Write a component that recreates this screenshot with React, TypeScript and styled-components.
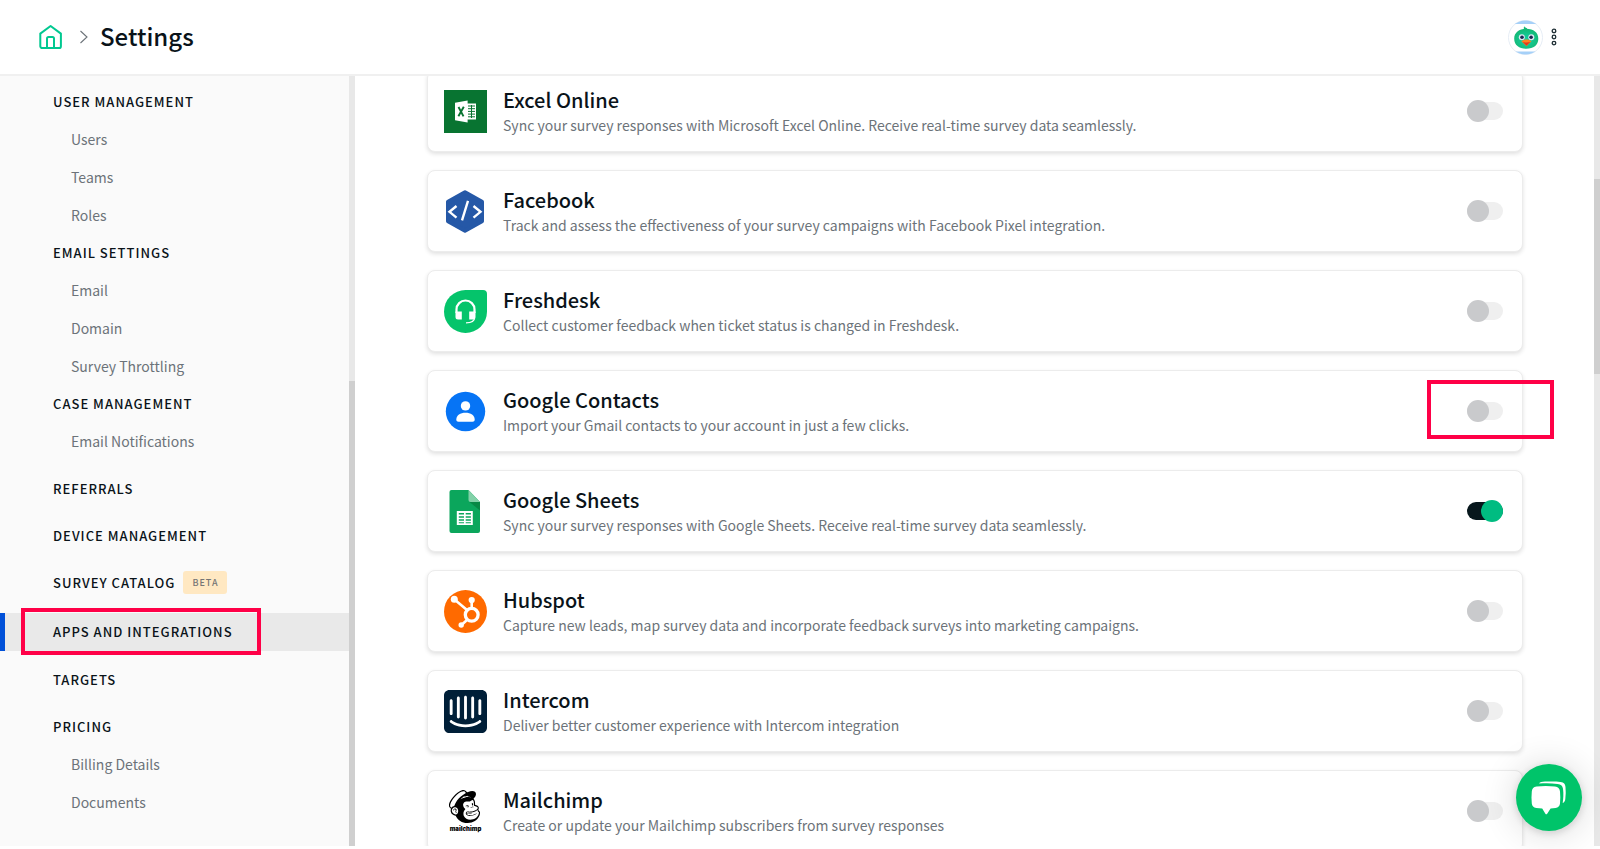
import React from 'react';
import styled, { createGlobalStyle, css } from 'styled-components';
import { SiIntercom, SiMailchimp } from 'react-icons/si';

const GlobalStyle = createGlobalStyle`
  *, *::before, *::after { box-sizing: border-box; }
  body {
    margin: 0;
    background: #fff;
    color: #0a1319;
    font-family: "Noto Sans CJK SC", "Open Sans", sans-serif;
  }
`;

const Page = styled.div`
  display: flex;
  flex-direction: column;
  height: 100vh;
  padding-bottom: 3px;
  overflow: hidden;
`;

const Header = styled.header`
  display: flex;
  flex: none;
  align-items: center;
  justify-content: space-between;
  height: 76px;
  padding: 0 41px 0 38px;
  border-bottom: 2px solid #f0f0f0;
  background: #fff;
`;

const Breadcrumb = styled.nav`
  display: flex;
  align-items: center;
`;

const HomeLink = styled.a`
  display: flex;
  margin-right: 16px;
`;

const PageTitle = styled.h1`
  margin: 0 0 0 11px;
  padding-bottom: 2px;
  font-size: 24px;
  font-weight: 500;
  line-height: 36px;
`;

const HeaderActions = styled.div`
  display: flex;
  align-items: center;
  gap: 6px;
`;

const PlainButton = styled.button`
  display: flex;
  padding: 0;
  border: 0;
  background: none;
  cursor: pointer;
`;

const Body = styled.div`
  display: flex;
  flex: 1;
  min-height: 0;
`;

const Sidebar = styled.aside`
  display: flex;
  flex: none;
  width: 355px;
  background: #fafafa;
`;

const Menu = styled.nav`
  flex: 1;
  padding-top: 7px;
`;

const MenuSection = styled.section<{ $gap: number }>`
  margin-top: ${(p) => p.$gap}px;
`;

const SectionLink = styled.a<{ $active?: boolean }>`
  position: relative;
  display: flex;
  align-items: center;
  height: 37px;
  padding-left: 53px;
  color: #0a1319;
  font-size: 13px;
  font-weight: 500;
  letter-spacing: 1px;
  line-height: 20px;
  text-decoration: none;
  ${(p) =>
    p.$active &&
    css`
      height: 38px;
      padding-left: 48px;
      border-left: 5px solid #0050d8;
      background: #e9e9e9;
    `}
`;

const SubLink = styled.a`
  display: flex;
  align-items: center;
  height: 38px;
  padding-left: 71px;
  color: #6c7379;
  font-size: 14px;
  line-height: 20px;
  text-decoration: none;
`;

const Badge = styled.span`
  margin-left: 8px;
  padding: 0 8px 0 9px;
  border-radius: 3px;
  background: #ffe8c2;
  color: #757575;
  font-size: 9px;
  line-height: 23px;
`;

const Highlight = styled.span<{ $kind: 'menu' | 'toggle' }>`
  position: absolute;
  border: 4px solid #ff0047;
  pointer-events: none;
  ${(p) =>
    p.$kind === 'menu'
      ? css`
          inset: -5px 88px -4px 16px;
        `
      : css`
          inset: 9px -32px 12px auto;
          width: 127px;
        `}
`;

const ScrollTrack = styled.div`
  display: flex;
  flex: none;
  flex-direction: column;
  width: 6px;
  background: #e8e8e8;
`;

const ScrollThumb = styled.div<{ $before: number; $size: number; $after: number }>`
  display: contents;
  &::before {
    content: '';
    flex: ${(p) => p.$before} 0 0;
  }
  & > i {
    flex: ${(p) => p.$size} 0 0;
    background: #cfcfcf;
  }
  &::after {
    content: '';
    flex: ${(p) => p.$after} 0 0;
  }
`;

const Main = styled.main`
  flex: 1;
  min-width: 0;
  padding: 0 71px 0 72px;
  overflow: hidden;
`;

const CardList = styled.ul`
  display: flex;
  flex-direction: column;
  gap: 18px;
  margin: -6px 0 0;
  padding: 0;
  list-style: none;
`;

const Card = styled.li`
  position: relative;
  display: flex;
  align-items: center;
  gap: 16px;
  height: 82px;
  padding: 0 19px 0 16px;
  border: 1px solid #ececec;
  border-radius: 8px;
  background: #fff;
  box-shadow: 0 2px 4px rgba(0, 0, 0, 0.12);
`;

const IconBox = styled.span`
  display: flex;
  flex: none;
  align-items: center;
  justify-content: center;
  width: 43px;
  height: 43px;
`;

const CardText = styled.label`
  flex: 1;
  cursor: pointer;
`;

const CardTitle = styled.span`
  display: block;
  font-size: 20px;
  font-weight: 500;
  line-height: 28px;
`;

const CardDescription = styled.span`
  display: block;
  color: #6c7379;
  font-size: 14px;
  line-height: 22px;
`;

const Switch = styled.input`
  position: relative;
  width: 36px;
  height: 18px;
  margin: 0;
  border-radius: 9px;
  appearance: none;
  background: #efefef;
  cursor: pointer;
  &::before {
    content: '';
    position: absolute;
    top: -2px;
    left: 0;
    width: 22px;
    height: 22px;
    border-radius: 50%;
    background: #c9cacc;
  }
  &:checked {
    background: #07171c;
  }
  &:checked::before {
    left: 14px;
    background: #00bc81;
  }
`;

const ChatButton = styled(PlainButton)`
  position: fixed;
  right: 18px;
  bottom: 18px;
  align-items: center;
  justify-content: center;
  width: 66px;
  height: 67px;
  border-radius: 50%;
  background: #00c46a;
  box-shadow: 0 2px 8px rgba(0, 0, 0, 0.14), 0 2px 36px rgba(0, 0, 0, 0.16);
`;

const HomeIcon = () => (
  <svg width="25" height="26" viewBox="0 0 25 26" fill="none" stroke="#00c890" strokeWidth="2" strokeLinejoin="round">
    <path d="M2.3 9.6 12.6 2l10.3 7.6v12.6a1.9 1.9 0 0 1-1.9 1.9H4.2a1.9 1.9 0 0 1-1.9-1.9z" />
    <path d="M9 24V14.5a1.5 1.5 0 0 1 1.5-1.5h4a1.5 1.5 0 0 1 1.5 1.5V24" />
  </svg>
);

const ChevronIcon = () => (
  <svg width="10" height="14" viewBox="0 0 10 14" fill="none" stroke="#6c7379" strokeWidth="1.1">
    <path d="M1.5 1 8 7l-6.5 6" />
  </svg>
);

const AvatarIcon = () => (
  <svg width="35" height="35" viewBox="0 0 35 35">
    <defs>
      <clipPath id="avatar-clip">
        <circle cx="17.5" cy="17.5" r="17" />
      </clipPath>
      <radialGradient id="avatar-body" cx="50%" cy="55%" r="55%">
        <stop offset="0" stopColor="#14d3a8" />
        <stop offset="1" stopColor="#14b874" />
      </radialGradient>
    </defs>
    <circle cx="17.5" cy="17.5" r="17" fill="#fff" stroke="#e6edf5" />
    <g clipPath="url(#avatar-clip)" fill="#a5d0f8">
      <path d="M0 0h35v4H0zM0 31.500h35V35H0z" />
    </g>
    <path d="M16 9.5c-.3-1.500-.3-2.600.3-3.200.3.900 1 1.300 2.600 1.900l.6 1.500z" fill="#14b874" />
    <path d="M18.300 8.800c7.200 0 12 3.800 12 10 0 6.400-4.900 10-12 10S6.200 25.200 6.200 18.800c0-6.200 5-10 12.100-10z" fill="url(#avatar-body)" />
    <circle cx="13.800" cy="17.300" r="3" fill="#dfe6f2" />
    <circle cx="23.300" cy="17.300" r="3" fill="#dfe6f2" />
    <circle cx="14" cy="17.300" r="1.800" fill="#1c2750" />
    <circle cx="23.100" cy="17.300" r="1.800" fill="#1c2750" />
    <path d="M13.300 21.300c2-1.500 3.600-1.800 5.200-1.800s3.200.3 4.900 1.800l-4.900 4.900z" fill="#ff8420" />
    <path d="M14.500 21.800c2.500 1 5.500 1 8 0l-4 4z" fill="#e03c20" />
  </svg>
);

const MoreIcon = () => (
  <svg width="10" height="20" viewBox="0 0 10 20" fill="none" stroke="#1d2d33" strokeWidth="1.3">
    <circle cx="5" cy="3.9" r="1.800" />
    <circle cx="5" cy="10" r="1.800" />
    <circle cx="5" cy="16.1" r="1.800" />
  </svg>
);

const ChatIcon = () => (
  <svg width="36" height="34" viewBox="0 0 36 34" fill="#fff">
    <path d="M8 2.600C9 1 11 .8 14 .6 19 .3 25 .3 29.500.9c3.500.4 4.700 2 5 5 .4 4 .3 8-.2 12-.2 2-1 3.400-2.600 4 .7-4.500.9-9 .4-13.400-.4-3.600-2-5.200-5.600-5.600C20 2.200 14 2.200 8 2.600z" />
    <path d="M5.500 5.600c6-.8 12.500-.8 18.500 0 3 .4 4.700 1.900 5 4.800.4 4 .4 8 0 12-.3 2.700-1.700 4.100-4.500 4.500-1.700.2-3.200.4-4.900.5l-3.400 5.300c-.6.800-1.300.8-1.800 0L11.200 27.400c-2-.1-3.900-.3-5.900-.5-2.800-.4-4.200-1.800-4.500-4.500-.4-4-.4-8 0-12 .3-2.900 1.700-4.400 4.700-4.800z" />
  </svg>
);

const ExcelIcon = () => (
  <svg width="43" height="43" viewBox="0 0 43 43">
    <path fill="#087431" d="M0 0h43v43H0z" />
    <path fill="#fff" d="M23 13.500h9v16h-9z" />
    <path fill="#fff" d="m11 12.800 12.600-2.200v21.800L11 30.200z" />
    <path stroke="#087431" strokeWidth="1" fill="none" d="M24 16h7M24 18.700h7M24 21.400h7M24 24.100h7M24 26.800h7M27.500 15v13" />
    <path stroke="#087431" strokeWidth="1.900" fill="none" d="m14.500 17 5 9.400M19.800 16.700l-5.400 9.600" />
  </svg>
);

const FacebookPixelIcon = () => (
  <svg width="43" height="43" viewBox="0 0 43 43">
    <path fill="#2558a7" stroke="#2558a7" strokeWidth="4" strokeLinejoin="round" d="m21 2.300 17 9.500v19.500l-17 9.400-17-9.400V11.800z" />
    <path fill="none" stroke="#fff" strokeWidth="2.400" d="m12.500 16-7 5.800 7 5.800M29.500 16l7 5.800-7 5.800M24 10.800l-6 19.600" />
  </svg>
);

const FreshdeskIcon = () => (
  <svg width="43" height="43" viewBox="0 0 43 43">
    <path fill="#05c46b" d="M21.500 0H39a4 4 0 0 1 4 4v17.500A21.500 21.500 0 1 1 21.500 0z" />
    <path fill="none" stroke="#fff" strokeWidth="2.200" d="M12.500 23v-3.500a9 9 0 0 1 18 0V23" />
    <path fill="#fff" d="M11.500 21.500h6.300v8H14a2.500 2.500 0 0 1-2.500-2.500zM25.200 21.500h6.300V27a2.500 2.500 0 0 1-2.500 2.500h-3.800z" />
    <path fill="none" stroke="#fff" strokeWidth="1.300" d="M30.500 28c0 3-2.500 4.800-8.500 4.800" />
  </svg>
);

const GoogleContactsIcon = () => (
  <svg width="43" height="43" viewBox="0 0 43 43">
    <circle cx="21.500" cy="21.500" r="19.700" fill="#0674f5" />
    <circle cx="21.500" cy="15.900" r="4.700" fill="#fff" />
    <path fill="#fff" d="M12.300 29.500c0-4.300 4-6.800 9.200-6.800s9.200 2.500 9.200 6.800c0 1.300-.8 2.300-2.200 2.300h-14c-1.400 0-2.200-1-2.200-2.300z" />
  </svg>
);

const GoogleSheetsIcon = () => (
  <svg width="43" height="43" viewBox="0 0 43 43">
    <path fill="#0ba65c" d="M7.500 0h17L36 12v29a2 2 0 0 1-2 2H7.500a2 2 0 0 1-2-2V2a2 2 0 0 1 2-2z" />
    <path fill="#078845" d="m25.500 12 10.500 8.500V12z" />
    <path fill="#82d1a8" d="M24.500 0 36 12H26.500a2 2 0 0 1-2-2z" />
    <path fill="#fff" d="M12.800 21h16v14h-16z" />
    <path fill="#0ba65c" d="M14.800 23h5.200v1.600h-5.200zM21.700 23h5.200v1.600h-5.200zM14.800 26.200H20v1.600h-5.200zM21.700 26.200h5.200v1.600h-5.200zM14.800 29.300H20v1.500h-5.200zM21.700 29.300h5.200v1.500h-5.200zM14.800 32.300H20v1h-5.200zM21.700 32.300h5.200v1h-5.200z" />
  </svg>
);

const HubspotIcon = () => (
  <svg width="43" height="43" viewBox="0 0 43 43">
    <circle cx="21.500" cy="21.500" r="21.500" fill="#ff6a00" />
    <g fill="none" stroke="#fff">
      <circle cx="27.700" cy="24.800" r="6.400" strokeWidth="3.300" />
      <path strokeWidth="2.600" d="M27.700 18V10M23 20 10.500 9.500M23.500 29.500 17.500 35" />
    </g>
    <g fill="#fff">
      <circle cx="27.700" cy="10" r="3.100" />
      <circle cx="10.300" cy="9.200" r="3.500" />
      <circle cx="17.200" cy="35" r="2.700" />
    </g>
  </svg>
);

const IntercomIcon = () => <SiIntercom size={43} color="#001f38" />;

const MailchimpIcon = () => (
  <svg width="43" height="43" viewBox="0 0 43 43">
    <SiMailchimp x="4" y="0" size={33} color="#000" />
    <text x="21.500" y="41" textAnchor="middle" fontFamily="Inter, sans-serif" fontSize="6" fontWeight="900">
      mailchimp
    </text>
  </svg>
);

type Section = { title: string; items?: string[]; gap?: number; badge?: string; active?: boolean };

const sections: Section[] = [
  { title: 'USER MANAGEMENT', items: ['Users', 'Teams', 'Roles'] },
  { title: 'EMAIL SETTINGS', items: ['Email', 'Domain', 'Survey Throttling'] },
  { title: 'CASE MANAGEMENT', items: ['Email Notifications'] },
  { title: 'REFERRALS', gap: 10 },
  { title: 'DEVICE MANAGEMENT', gap: 10 },
  { title: 'SURVEY CATALOG', gap: 10, badge: 'BETA' },
  { title: 'APPS AND INTEGRATIONS', gap: 12, active: true },
  { title: 'TARGETS', gap: 10 },
  { title: 'PRICING', gap: 10, items: ['Billing Details', 'Documents'] },
];

type Integration = {
  id: string;
  name: string;
  description: string;
  Icon: React.FC;
  enabled?: boolean;
  highlighted?: boolean;
};

const integrations: Integration[] = [
  { id: 'excel', name: 'Excel Online', description: 'Sync your survey responses with Microsoft Excel Online. Receive real-time survey data seamlessly.', Icon: ExcelIcon },
  { id: 'facebook', name: 'Facebook', description: 'Track and assess the effectiveness of your survey campaigns with Facebook Pixel integration.', Icon: FacebookPixelIcon },
  { id: 'freshdesk', name: 'Freshdesk', description: 'Collect customer feedback when ticket status is changed in Freshdesk.', Icon: FreshdeskIcon },
  { id: 'contacts', name: 'Google Contacts', description: 'Import your Gmail contacts to your account in just a few clicks.', Icon: GoogleContactsIcon, highlighted: true },
  { id: 'sheets', name: 'Google Sheets', description: 'Sync your survey responses with Google Sheets. Receive real-time survey data seamlessly.', Icon: GoogleSheetsIcon, enabled: true },
  { id: 'hubspot', name: 'Hubspot', description: 'Capture new leads, map survey data and incorporate feedback surveys into marketing campaigns.', Icon: HubspotIcon },
  { id: 'intercom', name: 'Intercom', description: 'Deliver better customer experience with Intercom integration', Icon: IntercomIcon },
  { id: 'mailchimp', name: 'Mailchimp', description: 'Create or update your Mailchimp subscribers from survey responses', Icon: MailchimpIcon },
];

export default function App() {
  return (
    <>
      <GlobalStyle />
      <Page>
        <Header>
          <Breadcrumb>
            <HomeLink href="#" aria-label="Home">
              <HomeIcon />
            </HomeLink>
            <ChevronIcon />
            <PageTitle>Settings</PageTitle>
          </Breadcrumb>
          <HeaderActions>
            <PlainButton type="button" aria-label="Account">
              <AvatarIcon />
            </PlainButton>
            <PlainButton type="button" aria-label="More options">
              <MoreIcon />
            </PlainButton>
          </HeaderActions>
        </Header>
        <Body>
          <Sidebar>
            <Menu>
              {sections.map(({ title, items = [], gap = 0, badge, active }) => (
                <MenuSection key={title} $gap={gap}>
                  <SectionLink href="#" $active={active}>
                    {title}
                    {badge && <Badge>{badge}</Badge>}
                    {active && <Highlight $kind="menu" />}
                  </SectionLink>
                  {items.map((item) => (
                    <SubLink key={item} href="#">
                      {item}
                    </SubLink>
                  ))}
                </MenuSection>
              ))}
            </Menu>
            <ScrollTrack>
              <ScrollThumb $before={305} $size={465} $after={0}>
                <i />
              </ScrollThumb>
            </ScrollTrack>
          </Sidebar>
          <Main>
            <CardList>
              {integrations.map(({ id, name, description, Icon, enabled, highlighted }) => (
                <Card key={id}>
                  <IconBox>
                    <Icon />
                  </IconBox>
                  <CardText htmlFor={id}>
                    <CardTitle>{name}</CardTitle>
                    <CardDescription>{description}</CardDescription>
                  </CardText>
                  <Switch id={id} type="checkbox" role="switch" defaultChecked={enabled} />
                  {highlighted && <Highlight $kind="toggle" />}
                </Card>
              ))}
            </CardList>
          </Main>
          <ScrollTrack>
            <ScrollThumb $before={103} $size={195} $after={472}>
              <i />
            </ScrollThumb>
          </ScrollTrack>
        </Body>
        <ChatButton type="button" aria-label="Open chat">
          <ChatIcon />
        </ChatButton>
      </Page>
    </>
  );
}
